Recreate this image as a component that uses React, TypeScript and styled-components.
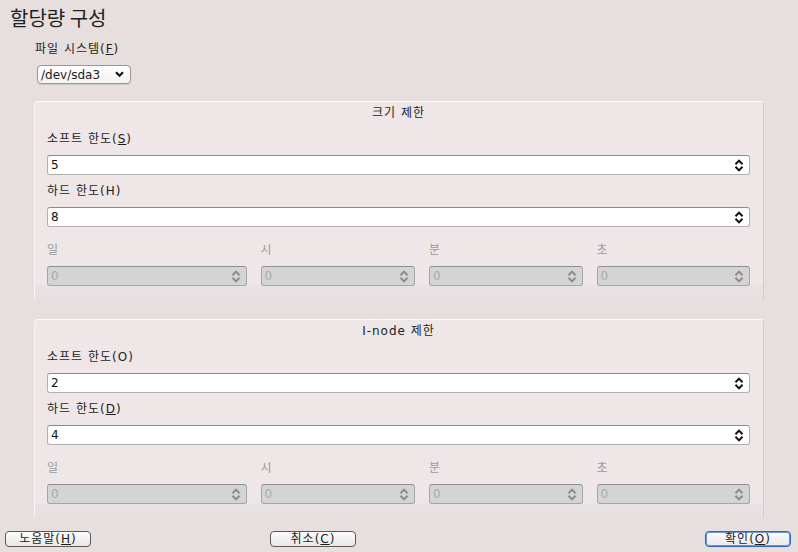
import React from "react";
import styled, { createGlobalStyle } from "styled-components";

const Global = createGlobalStyle`
  html, body { margin: 0; padding: 0; background: #e6dfde; }
  body { font-family: "DejaVu Sans", "Noto Sans CJK KR", sans-serif; font-size: 12px; color: #1c1c1c; }
`;

const Window = styled.div`
  width: 798px;
  height: 552px;
  box-sizing: border-box;
  padding: 5px 0 0 0;
  display: flex;
  flex-direction: column;
`;

const Title = styled.div`
  font-family: "Noto Sans CJK KR", sans-serif;
  font-size: 20px;
  line-height: 26px;
  padding-left: 10px;
  color: #222;
`;

const Top = styled.div`
  padding-left: 35px;
  margin-top: 9px;
  display: flex;
  flex-direction: column;
  align-items: flex-start;
`;

const Label = styled.div<{ $disabled?: boolean }>`
  font-family: "DejaVu Sans", "Noto Sans CJK KR", sans-serif;
  font-size: 12px;
  line-height: 18px;
  height: 18px;
  letter-spacing: 1px;
  color: ${(p) => (p.$disabled ? "#9c9a9a" : "#1c1c1c")};
  white-space: nowrap;
`;

const U = styled.span`
  text-decoration: underline;
`;

const Select = styled.div`
  margin-top: 7px;
  margin-left: 2px;
  height: 19px;
  box-sizing: border-box;
  width: 94px;
  border: 1px solid #9a9696;
  border-radius: 4px;
  background: linear-gradient(#ffffff, #f4f2f2);
  display: flex;
  align-items: center;
  justify-content: space-between;
  padding: 0 6px 0 3px;
  font-size: 12px;
  box-shadow: 0 1px 0 #cfc8c8;
`;

const Panels = styled.div`
  margin: 17px 34px 0 34px;
  display: flex;
  flex-direction: column;
  gap: 19px;
`;

const Panel = styled.div`
  box-sizing: border-box;
  height: 199px;
  border-top: 1px solid #fbf9f9;
  border-left: 1px solid #f8f4f4;
  border-right: 1px solid #d3cbcb;
  border-radius: 4px 4px 0 0;
  background: linear-gradient(
    to bottom,
    #efe6e7 0,
    #efe6e7 calc(100% - 16px),
    #e8e2e7 calc(100% - 14px),
    #e7e0df 100%
  );
  padding: 2px 13px 0 12px;
  display: flex;
  flex-direction: column;
`;

const PanelTitle = styled.div`
  text-align: center;
  font-size: 12px;
  line-height: 18px;
  height: 18px;
  letter-spacing: 1px;
  margin-bottom: 8px;
`;

const Field = styled.div`
  display: flex;
  flex-direction: column;
  & + & {
    margin-top: 7px;
  }
`;

const Spin = styled.div<{ $disabled?: boolean }>`
  margin-top: 7px;
  height: 20px;
  box-sizing: border-box;
  border: 1px solid ${(p) => (p.$disabled ? "#a7a5a5" : "#b4b0b0")};
  border-top-color: ${(p) => (p.$disabled ? "#8f8d8d" : "#8e8a8a")};
  border-radius: 3px;
  background: ${(p) => (p.$disabled ? "#d4d4d4" : "#ffffff")};
  color: ${(p) => (p.$disabled ? "#a9a9a9" : "#111")};
  display: flex;
  align-items: center;
  justify-content: space-between;
  padding: 0 5px 0 3px;
  font-size: 12px;
`;

const TimeGrid = styled.div`
  margin-top: 14px;
  display: grid;
  grid-template-columns: 199fr 154fr 153fr 153fr;
  column-gap: 14px;
`;

const TimeCell = styled.div`
  display: flex;
  flex-direction: column;
`;

const Buttons = styled.div`
  margin-top: auto;
  margin-bottom: 5px;
  display: flex;
  padding: 0 7px 0 5px;
`;

const Button = styled.div<{ $default?: boolean; $gap?: string }>`
  width: 86px;
  height: 16px;
  box-sizing: border-box;
  margin-left: ${(p) => p.$gap ?? "0"};
  border: 1px solid ${(p) => (p.$default ? "#2f62b8" : "#5a5858")};
  border-radius: 4px;
  background: linear-gradient(#fdfdfd, #e9e7e7);
  display: flex;
  align-items: center;
  justify-content: center;
  font-size: 12px;
  line-height: 14px;
  letter-spacing: 1px;
  box-shadow: ${(p) => (p.$default ? "inset 0 0 0 1px #6f98d8" : "none")};
`;

const SpinArrow = ({ color }: { color: string }) => (
  <svg width="10" height="13" viewBox="0 0 10 13">
    <path d="M1.5 5.2 L5 1.6 L8.5 5.2" fill="none" stroke={color} strokeWidth="2" />
    <path d="M1.5 7.8 L5 11.4 L8.5 7.8" fill="none" stroke={color} strokeWidth="2" />
  </svg>
);

const DownArrow = () => (
  <svg width="9" height="7" viewBox="0 0 9 7">
    <path d="M1 1.3 L4.5 4.8 L8 1.3" fill="none" stroke="#111" strokeWidth="2.2" />
  </svg>
);

type Lim = { title: string; soft: React.ReactNode; softVal: string; hard: React.ReactNode; hardVal: string };

const LimitPanel = ({ title, soft, softVal, hard, hardVal }: Lim) => (
  <Panel>
    <PanelTitle>{title}</PanelTitle>
    <Field>
      <Label>{soft}</Label>
      <Spin>
        <span>{softVal}</span>
        <SpinArrow color="#111" />
      </Spin>
    </Field>
    <Field>
      <Label>{hard}</Label>
      <Spin>
        <span>{hardVal}</span>
        <SpinArrow color="#111" />
      </Spin>
    </Field>
    <TimeGrid>
      {["일", "시", "분", "초"].map((t) => (
        <TimeCell key={t}>
          <Label $disabled>{t}</Label>
          <Spin $disabled>
            <span>0</span>
            <SpinArrow color="#8c8a8a" />
          </Spin>
        </TimeCell>
      ))}
    </TimeGrid>
  </Panel>
);

export default function App() {
  return (
    <Window>
      <Global />
      <Title>할당량 구성</Title>
      <Top>
        <Label>
          파일 시스템(<U>F</U>)
        </Label>
        <Select>
          <span>/dev/sda3</span>
          <DownArrow />
        </Select>
      </Top>
      <Panels>
        <LimitPanel
          title="크기 제한"
          soft={<>소프트 한도(<U>S</U>)</>}
          softVal="5"
          hard={<>하드 한도(H)</>}
          hardVal="8"
        />
        <LimitPanel
          title="I-node 제한"
          soft={<>소프트 한도(O)</>}
          softVal="2"
          hard={<>하드 한도(<U>D</U>)</>}
          hardVal="4"
        />
      </Panels>
      <Buttons>
        <Button>
          노움말(<U>H</U>)
        </Button>
        <Button $gap="179px">
          취소(<U>C</U>)
        </Button>
        <Button $default $gap="auto">
          확인(<U>O</U>)
        </Button>
      </Buttons>
    </Window>
  );
}
